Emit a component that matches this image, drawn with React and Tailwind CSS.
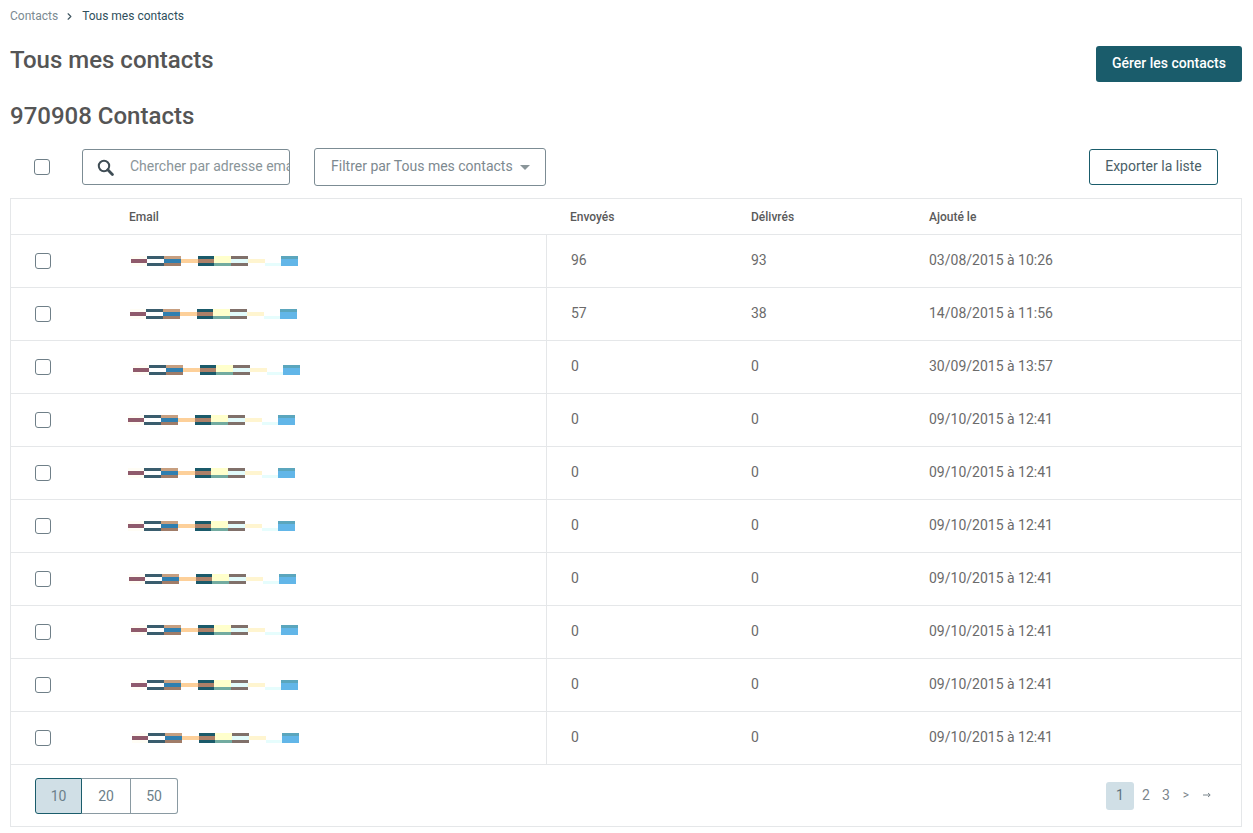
import { ChevronRight } from 'lucide-react';

const rows = [
  { sent: '96', delivered: '93', date: '03/08/2015 à 10:26', x: 0, y: 0 },
  { sent: '57', delivered: '38', date: '14/08/2015 à 11:56', x: -1, y: 0 },
  { sent: '0', delivered: '0', date: '30/09/2015 à 13:57', x: 2, y: 3 },
  { sent: '0', delivered: '0', date: '09/10/2015 à 12:41', x: -3, y: 0 },
  { sent: '0', delivered: '0', date: '09/10/2015 à 12:41', x: -3, y: 0 },
  { sent: '0', delivered: '0', date: '09/10/2015 à 12:41', x: -3, y: 0 },
  { sent: '0', delivered: '0', date: '09/10/2015 à 12:41', x: -2, y: 0 },
  { sent: '0', delivered: '0', date: '09/10/2015 à 12:41', x: 0, y: -2 },
  { sent: '0', delivered: '0', date: '09/10/2015 à 12:41', x: 0, y: 0 },
  { sent: '0', delivered: '0', date: '09/10/2015 à 12:41', x: 1, y: 0 },
];

// Pixelated block hiding the email address: [x, width, top, middle, bottom]
const mosaic = [
  [0, 16, '#fffdf5', '#8f5a6b', '#fffdf5'],
  [16, 17, '#3a5d6e', '#ffffff', '#3a5d6e'],
  [33, 17, '#c79f80', '#2f7fb0', '#a07c68'],
  [50, 17, '#ffffff', '#fdd09a', '#ffffff'],
  [67, 16, '#1a5a6a', '#ad8068', '#1a5a6a'],
  [83, 17, '#ffffcc', '#ffffcc', '#72aba0'],
  [100, 17, '#80706a', '#e2fbfb', '#80706a'],
  [117, 17, '#ffffff', '#fff5d0', '#ffffff'],
  [134, 16, '#ffffff', '#ffffff', '#e6fdfd'],
  [150, 17, '#5ba6bd', '#62b6e8', '#62b6e8'],
];

function Redacted({ x, y }) {
  return (
    <svg
      width="167"
      height="10"
      viewBox="0 0 167 10"
      shapeRendering="crispEdges"
      className="block"
      style={{ transform: `translate(${x}px, ${y}px)` }}
    >
      {mosaic.map(([left, w, top, mid, bottom]) => (
        <g key={left} transform={`translate(${left} 0)`}>
          <rect width={w} height="3" fill={top} />
          <rect y="3" width={w} height="4" fill={mid} />
          <rect y="7" width={w} height="3" fill={bottom} />
        </g>
      ))}
    </svg>
  );
}

function Checkbox() {
  return <input type="checkbox" className="appearance-none block w-4 h-4 bg-white border border-[#6f7f88] rounded-[3px]" />;
}

export default function App() {
  return (
    <div className="h-[833px] overflow-hidden bg-white pl-[10px] pr-[11px] font-['Roboto',sans-serif]">
      {/* Breadcrumb */}
      <nav className="flex items-center h-4 mt-2 text-xs leading-4">
        <span className="text-[#7b8a92]">Contacts</span>
        <ChevronRight size={11} strokeWidth={2.5} className="text-[#3f5560] ml-[6px] mr-[7px]" />
        <span className="text-[#2f4f5c]">Tous mes contacts</span>
      </nav>

      {/* Title */}
      <div className="flex justify-between items-start mt-[22px]">
        <h1 className="text-2xl leading-7 font-medium text-[#555555]">Tous mes contacts</h1>
        <button className="w-[146px] h-9 pb-[2px] rounded-[3px] bg-[#1a5c6b] text-white text-sm font-medium">Gérer les contacts</button>
      </div>

      <h2 className="text-2xl leading-7 font-medium text-[#555555] mt-5">970908 Contacts</h2>

      {/* Toolbar */}
      <div className="flex items-center h-[38px] mt-[18px]">
        <div className="ml-6 w-4">
          <Checkbox />
        </div>
        <div className="ml-8 w-[208px] h-9 flex items-center border border-[#7c8c94] rounded-[3px] overflow-hidden">
          <svg width="17" height="17" viewBox="0 0 17 17" fill="none" className="ml-[14px] shrink-0 text-[#3f4d55]">
            <circle cx="7" cy="7" r="5.2" stroke="currentColor" strokeWidth="2" />
            <path d="M10.8 10.8 15.4 15.4" stroke="currentColor" strokeWidth="2.8" strokeLinecap="round" />
          </svg>
          <input
            placeholder="Chercher par adresse email"
            className="ml-4 mb-[2px] min-w-0 flex-1 text-sm text-[#555555] outline-none placeholder:text-[#8a9599]"
          />
        </div>
        <button className="ml-6 w-[232px] h-[38px] pb-[2px] flex items-center pl-4 border border-[#7c8c94] rounded-[3px] text-sm text-[#7d898f]">
          Filtrer par Tous mes contacts
          <span className="ml-[7px] mt-[2px] w-0 h-0 border-x-[5px] border-x-transparent border-t-[5px] border-t-[#8a9599]" />
        </button>
        <button className="ml-auto mr-6 w-[129px] h-9 pb-[2px] rounded-[3px] border border-[#1a5c6b] text-sm text-[#4b5f68]">Exporter la liste</button>
      </div>

      {/* Table */}
      <div className="mt-3 h-[629px] border border-[#e5e7e9]">
        <div className="flex items-center h-9 border-b border-[#e5e7e9] text-xs font-medium text-[#5a5a5a]">
          <span className="ml-[118px] w-[441px]">Email</span>
          <span className="w-[181px]">Envoyés</span>
          <span className="w-[178px]">Délivrés</span>
          <span>Ajouté le</span>
        </div>

        {rows.map((row, i) => (
          <div key={i} className="flex items-stretch h-[53px] border-b border-[#e5e7e9] text-sm text-[#6b6b6b]">
            <div className="flex items-center w-[536px] border-r border-[#e5e7e9]">
              <div className="ml-6 w-4">
                <Checkbox />
              </div>
              <div className="ml-[80px]">
                <Redacted x={row.x} y={row.y} />
              </div>
            </div>
            <div className="flex items-center pl-6 pb-[2px] w-[204px]">{row.sent}</div>
            <div className="flex items-center pb-[2px] w-[178px]">{row.delivered}</div>
            <div className="flex items-center pb-[2px]">{row.date}</div>
          </div>
        ))}

        {/* Footer */}
        <div className="flex items-center justify-between h-[61px] pl-6 pr-7">
          <div className="flex h-9 text-sm text-[#6c7f8a]">
            <button className="w-[47px] bg-[#d0dfe6] border border-[#1a5c6b] rounded-l-[3px]">10</button>
            <button className="w-[49px] border-y border-r border-[#8a9aa2]">20</button>
            <button className="w-[47px] border-y border-r border-[#8a9aa2] rounded-r-[3px]">50</button>
          </div>
          <div className="flex items-center text-sm text-[#7b868c]">
            <span className="flex items-center justify-center w-7 h-7 pb-[1px] rounded-[3px] bg-[#d0dfe6] text-[#5f7480]">1</span>
            <span className="ml-[6px] w-3 text-center pb-[1px]">2</span>
            <span className="ml-2 w-3 text-center pb-[1px]">3</span>
            <span className="ml-2 w-3 text-center text-xs pb-[1px]">&gt;</span>
            <svg width="12" height="8" viewBox="0 0 12 8" fill="none" stroke="currentColor" className="ml-[9px] mb-[2px]">
              <path d="M2 4H9M7 2 9.2 4 7 6" strokeWidth="1" />
            </svg>
          </div>
        </div>
      </div>
    </div>
  );
}
